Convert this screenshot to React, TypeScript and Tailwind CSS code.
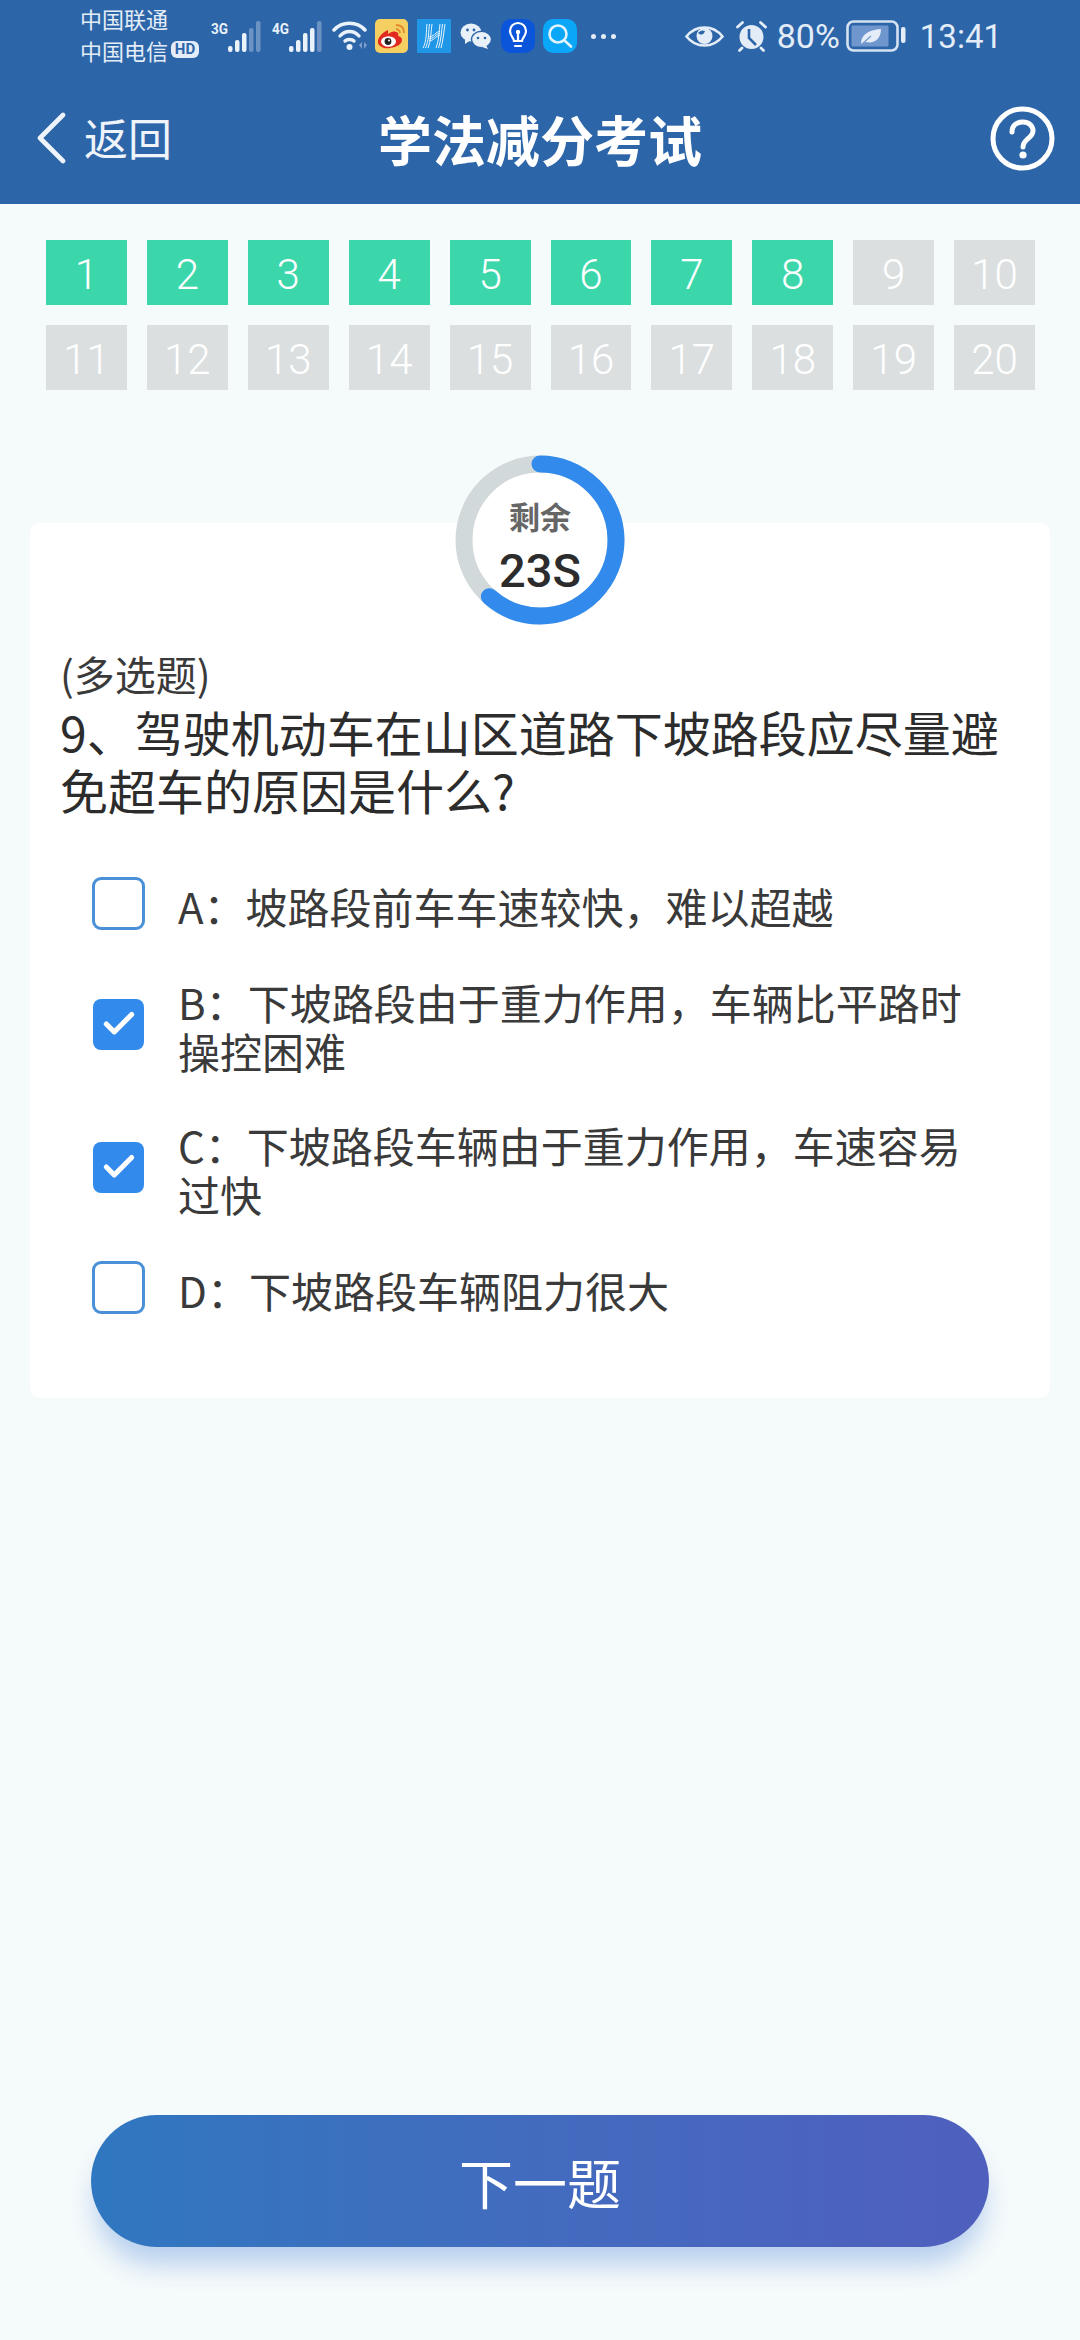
import React from 'react';
import { Check } from 'lucide-react';

const cjk = '"Noto Sans CJK SC", "Noto Sans", sans-serif';
const roboto = 'Roboto, sans-serif';

const options = [
  { key: 'A', text: '坡路段前车车速较快\uFF0C难以超越', checked: false },
  { key: 'B', text: '下坡路段由于重力作用\uFF0C车辆比平路时操控困难', checked: true },
  { key: 'C', text: '下坡路段车辆由于重力作用\uFF0C车速容易过快', checked: true },
  { key: 'D', text: '下坡路段车辆阻力很大', checked: false },
];

function Signal({ label, lit }: { label: string; lit: number }) {
  const bars = [
    { x: 24, h: 12 },
    { x: 31, h: 19 },
    { x: 38, h: 24 },
    { x: 45, h: 31 },
  ];
  return (
    <svg width="50" height="32" viewBox="0 0 50 32">
      <text x="0" y="14" fontSize="15" fontWeight="700" fill="#eaf2fa" fontFamily={roboto} textLength="17" lengthAdjust="spacingAndGlyphs">
        {label}
      </text>
      <rect x="17" y="26" width="4.5" height="6" rx="2" fill="#eaf2fa" />
      {bars.map((b, i) => (
        <rect key={b.x} x={b.x} y={32 - b.h} width="4.5" height={b.h} rx="2" fill={i < lit ? '#eaf2fa' : '#6d93c4'} />
      ))}
    </svg>
  );
}

function Wifi() {
  return (
    <svg width="36" height="30" viewBox="0 0 36 30" fill="none" stroke="#eaf2fa" strokeWidth="3.4" strokeLinecap="round">
      <path d="M2 9C10 0 25 0 33 9" />
      <path d="M8 15C13 9 22 9 27 15" />
      <path d="M13 20C15 18 20 18 22 20" />
      <circle cx="17.5" cy="26" r="3" fill="#eaf2fa" stroke="none" />
      <path d="M27 24l3-3v7zM32 21l3 3-3 4z" fill="#7f9fc9" stroke="none" />
    </svg>
  );
}

function Weibo() {
  return (
    <svg width="33" height="34" viewBox="0 0 33 34">
      <rect width="33" height="34" rx="5" fill="#f6cf63" />
      <path d="M13 11C6 14 2 20 3 24c1 4 7 6 12 5 7-1 12-4 12-8 0-3-3-4-4-4 1-2 0-4-2-4-3-1-5 0-8 2 0-1 0-3-0-4z" fill="#e02a1f" />
      <ellipse cx="13.5" cy="22.5" rx="7.5" ry="5.2" fill="#fff" />
      <circle cx="13" cy="22.5" r="3.4" fill="#222" />
      <circle cx="14" cy="21.5" r="1" fill="#fff" />
      <path d="M21 6c5 0 8 3 8 8M21 10c2 0 4 2 4 4" fill="none" stroke="#e58a2c" strokeWidth="1.8" />
    </svg>
  );
}

function HApp() {
  return (
    <svg width="34" height="34" viewBox="0 0 34 34" fill="none" stroke="#e8f5ff" strokeWidth="1">
      <rect width="34" height="34" fill="#1f96e6" stroke="none" />
      <path d="M6 29C10 22 9 12 10 5M8.5 29C12 22 11.5 12 12.5 5M11 29C14 22 14 12 15 5" />
      <path d="M19 29C22 22 22 12 23 5M21.5 29C24 22 24.5 12 25.5 5M24 29C26 22 27 12 28 5" />
      <path d="M12 20C16 20 19 15 23 14M12 18C16 18 19 13 23 12M12 22C16 22 19 17 23 16" />
    </svg>
  );
}

function Wechat() {
  return (
    <svg width="32" height="27" viewBox="0 0 32 27">
      <ellipse cx="11" cy="9.5" rx="10.5" ry="9" fill="#e8f0f8" />
      <path d="M5 15l0 6 6-4z" fill="#e8f0f8" />
      <ellipse cx="21.5" cy="16.5" rx="10" ry="8.2" fill="#e8f0f8" stroke="#2d65a9" strokeWidth="1.4" />
      <path d="M26 22l2 4-6-2z" fill="#e8f0f8" />
      <circle cx="7.5" cy="7" r="1.4" fill="#2d65a9" />
      <circle cx="14" cy="7" r="1.4" fill="#2d65a9" />
      <circle cx="18" cy="15" r="1.3" fill="#2d65a9" />
      <circle cx="25" cy="15" r="1.3" fill="#2d65a9" />
    </svg>
  );
}

function Bulb() {
  return (
    <svg width="34" height="34" viewBox="0 0 34 34" fill="none" stroke="#fff" strokeWidth="2.2">
      <rect width="34" height="34" rx="10" fill="#0a55d9" stroke="none" />
      <path d="M13 22c0-3-4-5-4-10a8 8 0 0 1 16 0c0 5-4 7-4 10z" />
      <path d="M14 27h6" strokeLinecap="round" />
      <circle cx="17" cy="13" r="2.2" fill="#fff" stroke="none" />
      <path d="M17 14v8" />
    </svg>
  );
}

function SearchApp() {
  return (
    <svg width="34" height="34" viewBox="0 0 34 34" fill="none" stroke="#dff3ff" strokeWidth="2.6" strokeLinecap="round">
      <rect width="34" height="34" rx="10" fill="#0aa6f7" stroke="none" />
      <circle cx="15" cy="15" r="8.5" />
      <path d="M21.5 21.5l6.5 6" />
    </svg>
  );
}

function Eye() {
  return (
    <svg width="39" height="21" viewBox="0 0 39 21" fill="none">
      <path d="M1.5 10.5C7 3.5 13 1.5 19.5 1.5S32 3.5 37.5 10.5C32 17.5 26 19.5 19.5 19.5S7 17.5 1.5 10.5z" stroke="#e4edf7" strokeWidth="2.6" />
      <circle cx="19.5" cy="10" r="8" fill="#e4edf7" />
      <path d="M13 7a6 6 0 0 1 7-2c-1 3-3 5-7 2z" fill="#2d65a9" />
    </svg>
  );
}

function Alarm() {
  return (
    <svg width="33" height="32" viewBox="0 0 33 32" fill="none">
      <circle cx="16.5" cy="17" r="12" fill="#e4edf7" />
      <path d="M14 9v9l7 7" stroke="#2d65a9" strokeWidth="2.6" />
      <path d="M2.5 7l5-4.5M30.5 7l-5-4.5M7 28l-2.5 2.5M26 28l2.5 2.5" stroke="#e4edf7" strokeWidth="2.8" strokeLinecap="round" />
    </svg>
  );
}

function Battery() {
  return (
    <svg width="60" height="32" viewBox="0 0 60 32" fill="none">
      <rect x="1.5" y="1.5" width="50" height="29" rx="6" stroke="#d4e2f1" strokeWidth="2.6" />
      <rect x="5.5" y="5.5" width="37" height="21" rx="1" fill="#7097cd" />
      <path d="M15 24c0-9 7-14 20-15 0 10-7 15-15 13z" fill="#e4edf7" />
      <path d="M15 25l10-9" stroke="#7097cd" strokeWidth="1.2" />
      <rect x="55" y="7" width="4.5" height="16" rx="2" fill="#e4edf7" />
    </svg>
  );
}

function StatusBar() {
  return (
    <div className="h-[72px] flex items-center text-[#e4edf7]">
      <div className="ml-[80px] mb-[5px] w-[131px] text-[22px] leading-[32px]">
        <div>中国联通</div>
        <div className="flex items-center">
          中国电信
          <span className="ml-[3px] h-[17px] w-[28px] rounded-[6px] bg-[#e4edf7] text-[#2d65a9] text-[15px] leading-[17px] font-bold text-center" style={{ fontFamily: roboto }}>
            HD
          </span>
        </div>
      </div>
      <Signal label="3G" lit={2} />
      <div className="ml-[11px]">
        <Signal label="4G" lit={3} />
      </div>
      <div className="ml-[10px] flex">
        <Wifi />
      </div>
      <div className="ml-[7px] flex">
        <Weibo />
      </div>
      <div className="ml-[9px] flex">
        <HApp />
      </div>
      <div className="ml-[9px] flex">
        <Wechat />
      </div>
      <div className="ml-[9px] flex">
        <Bulb />
      </div>
      <div className="ml-[8px] flex">
        <SearchApp />
      </div>
      <div className="ml-[14px] flex gap-[5px]">
        <span className="size-[5px] rounded-full bg-[#e4edf7]" />
        <span className="size-[5px] rounded-full bg-[#e4edf7]" />
        <span className="size-[5px] rounded-full bg-[#e4edf7]" />
      </div>
      <div className="ml-auto mr-[78px] flex items-center">
        <Eye />
        <div className="ml-[11px] flex">
          <Alarm />
        </div>
        <span className="ml-[9px] text-[34px] leading-none" style={{ fontFamily: roboto }}>
          80%
        </span>
        <div className="ml-[6px] flex">
          <Battery />
        </div>
        <span className="ml-[14px] text-[33px] leading-none" style={{ fontFamily: roboto }}>
          13:41
        </span>
      </div>
    </div>
  );
}

function NavBar() {
  return (
    <div className="relative h-[132px] flex items-center text-white">
      <svg className="ml-[36px]" width="30" height="52" viewBox="0 0 30 52" fill="none" stroke="#eef4fa" strokeWidth="4.6" strokeLinecap="round" strokeLinejoin="round">
        <path d="M27 3L4 26l23 23" />
      </svg>
      <span className="ml-[18px] -mt-[3px] text-[44px] leading-none text-[#eef4fa]">返回</span>
      <span className="absolute left-0 right-0 top-[43px] text-center text-[54px] leading-[48px] font-bold">学法减分考试</span>
      <svg className="ml-auto mr-[25px]" width="65" height="65" viewBox="0 0 65 65" fill="none" stroke="#fff" strokeWidth="5">
        <circle cx="32.5" cy="32.5" r="29.5" />
        <path d="M22 26c0-7 5-10 11-10s10 4 10 9c0 7-10 8-10 16" strokeLinecap="round" />
        <circle cx="33" cy="49" r="3.6" fill="#fff" stroke="none" />
      </svg>
    </div>
  );
}

function Cells() {
  const cells = Array.from({ length: 20 }, (_, i) => i + 1);
  return (
    <div className="mt-[36px] ml-[46px] w-[989px] grid grid-cols-10 gap-x-[20px] gap-y-[20px]">
      {cells.map((n) => (
        <div
          key={n}
          className={`h-[65px] pt-[4px] flex items-center justify-center text-[42px] font-light text-white ${n <= 8 ? 'bg-[#3bd7ab]' : 'bg-[#dbdfe0]'}`}
          style={{ fontFamily: roboto }}
        >
          {n}
        </div>
      ))}
    </div>
  );
}

function Timer() {
  const r = 76;
  const c = 2 * Math.PI * r;
  return (
    <div className="relative z-10 mx-auto mt-[65px] size-[170px] rounded-full bg-white">
      <svg className="block" width="170" height="170" viewBox="0 0 170 170" fill="none">
        <circle cx="85" cy="85" r={r} stroke="#d2d9db" strokeWidth="17" />
        <circle
          cx="85"
          cy="85"
          r={r}
          stroke="#328bec"
          strokeWidth="17"
          strokeLinecap="round"
          strokeDasharray={`${c * 0.615} ${c}`}
          transform="rotate(-90 85 85)"
        />
      </svg>
      <div className="absolute inset-0 flex flex-col items-center">
        <span className="mt-[42px] text-[31px] leading-[38px] font-bold text-[#666]">剩余</span>
        <span className="mt-[13px] text-[47px] leading-[46px] font-medium text-[#2c2c2c]" style={{ fontFamily: roboto }}>
          23S
        </span>
      </div>
    </div>
  );
}

function OptionRow({ item }: { item: (typeof options)[number] }) {
  return (
    <div className="flex items-center">
      {item.checked ? (
        <div className="ml-[1px] mr-[1px] size-[51px] rounded-[8px] bg-[#328bec] flex items-center justify-center">
          <Check size={38} color="#fff" strokeWidth={3.2} />
        </div>
      ) : (
        <div className="size-[53px] rounded-[9px] border-[3px] border-[#4a90d9] bg-white" />
      )}
      <div className="ml-[33px] w-[800px] translate-y-[2px] text-[42px] leading-[49px] text-[#3a3a3a]">
        {item.key}
        {'\uFF1A'}
        {item.text}
      </div>
    </div>
  );
}

export default function App() {
  return (
    <div className="w-[1080px] h-[2340px] flex flex-col bg-[#f5fafb] overflow-hidden" style={{ fontFamily: cjk }}>
      <header className="bg-[#2d65a9]">
        <StatusBar />
        <NavBar />
      </header>

      <Cells />
      <Timer />

      {/* card slides up behind the timer ring */}
      <div className="-mt-[102px] mx-[30px] h-[875px] rounded-[10px] bg-white pt-[121px]">
        <div className="ml-[30px] mr-[40px]">
          <div className="text-[41px] leading-[58px] text-[#3a3a3a]">(多选题)</div>
          <div className="text-[48px] leading-[58px] text-[#2c2c2c]">9、驾驶机动车在山区道路下坡路段应尽量避免超车的原因是什么?</div>
        </div>
        <div className="mt-[59px] ml-[62px] flex flex-col gap-[45px]">
          {options.map((o) => (
            <OptionRow key={o.key} item={o} />
          ))}
        </div>
      </div>

      <button className="mt-auto mb-[93px] mx-[91px] h-[132px] rounded-full text-[54px] text-white bg-gradient-to-r from-[#2f77c0] to-[#4f5fbd] shadow-[0_22px_24px_-4px_rgba(60,120,210,0.32)]">
        下一题
      </button>
    </div>
  );
}
